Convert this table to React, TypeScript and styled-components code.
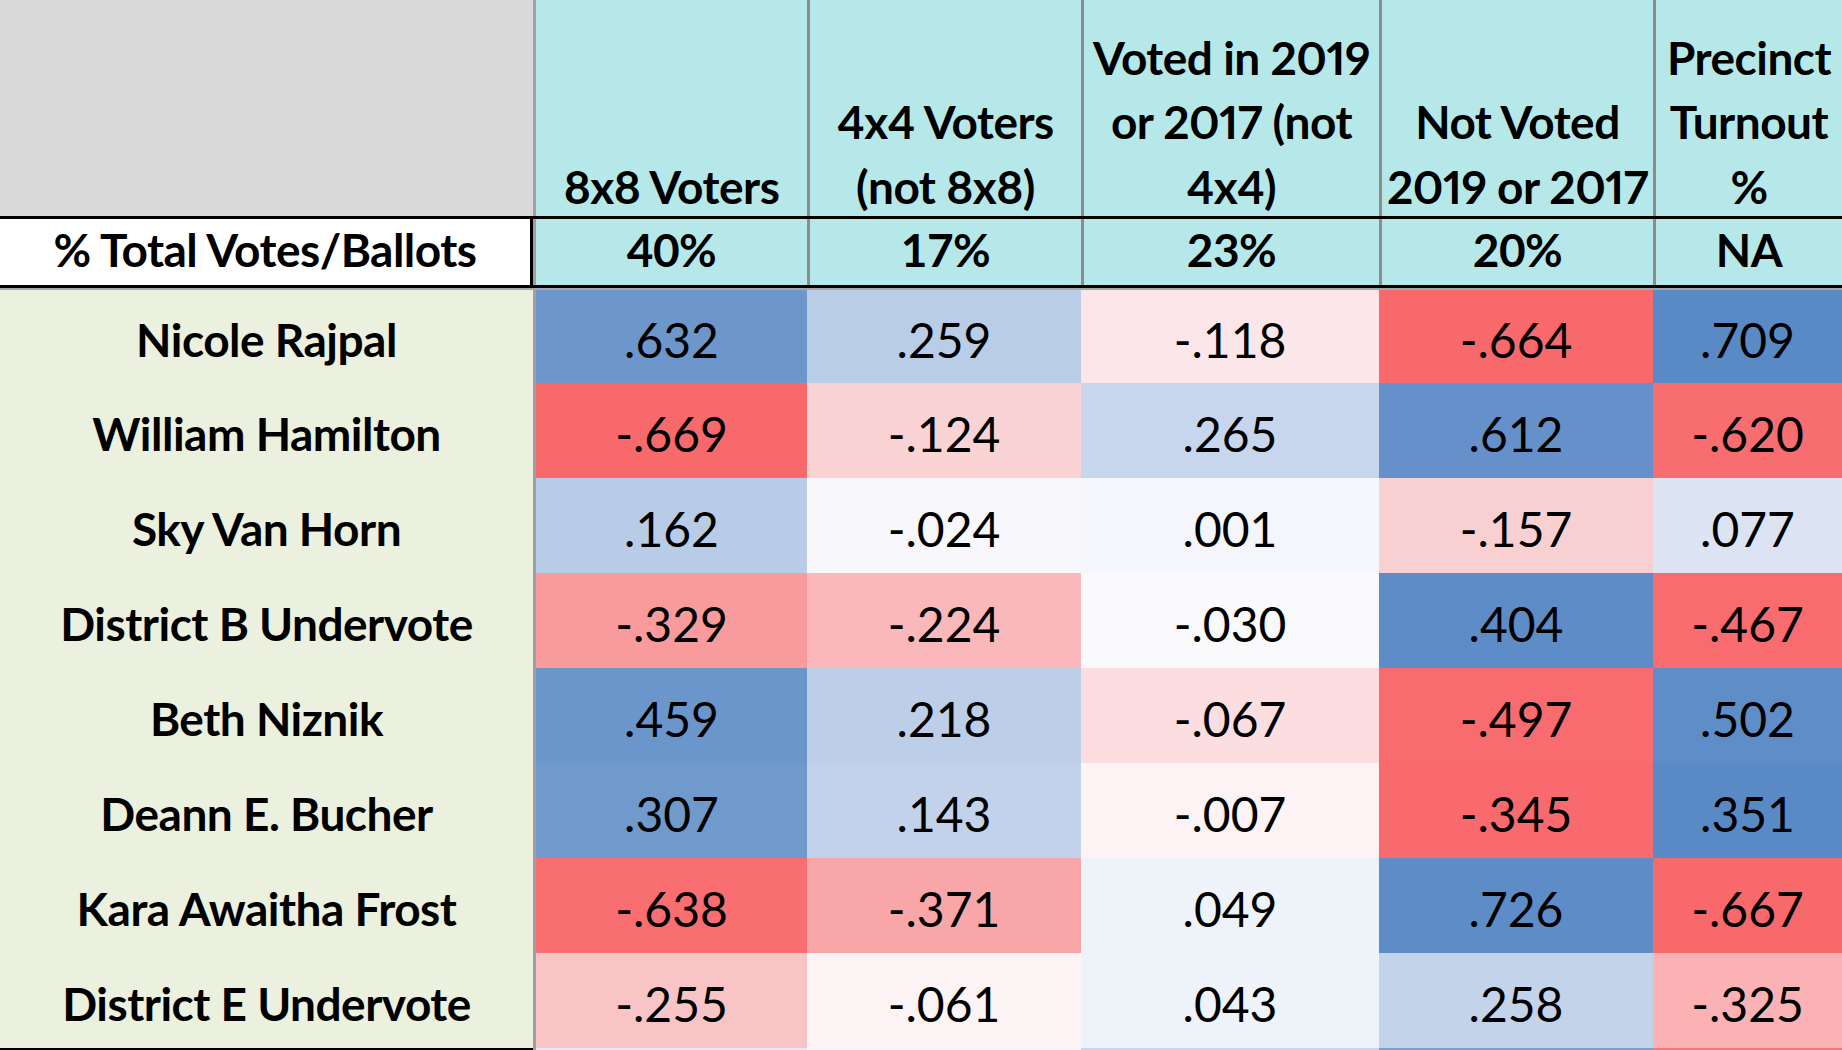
import React from 'react';
import styled, { createGlobalStyle } from 'styled-components';

const GlobalStyle = createGlobalStyle`
  html, body {
    margin: 0;
    padding: 0;
    background: #ffffff;
    overflow: hidden;
  }
  body {
    font-family: Lato, 'Open Sans', sans-serif;
    color: #000000;
  }
`;

const COLUMNS = '533px 274px 274px 298px 274px 1fr';

const Sheet = styled.div`
  width: 1842px;
  height: 1050px;
  overflow: hidden;
  display: flex;
  flex-direction: column;
`;

const Row = styled.div`
  display: grid;
  grid-template-columns: ${COLUMNS};
`;

const HeaderRow = styled(Row)`
  height: 216px;
  grid-template-rows: 216px;
  flex-shrink: 0;
`;

const Corner = styled.div`
  background: #d9d9d9;
`;

const HeadCell = styled.div<{ $first?: boolean }>`
  background: #b6e8ea;
  border-left: 3px solid ${p => (p.$first ? '#a0a0a0' : '#8c8c8c')};
  min-height: 0;
  display: flex;
  align-items: flex-end;
  justify-content: center;
  text-align: center;
  white-space: nowrap;
  font-weight: 700;
  font-size: 46px;
  letter-spacing: -0.5px;
  line-height: 64.5px;
  font-variant-numeric: proportional-nums;
`;

const HeadText = styled.span`
  margin-bottom: -3px;
`;

const TotalRow = styled(Row)`
  height: 72px;
  flex-shrink: 0;
  box-sizing: border-box;
  border-top: 3px solid #000;
  border-bottom: 3px solid #000;
  font-weight: 700;
  font-size: 46px;
  letter-spacing: -0.5px;
  white-space: nowrap;
`;

const TotalLabel = styled.div`
  background: #ffffff;
  border-right: 3px solid #000;
  display: flex;
  align-items: center;
  justify-content: center;
  padding-bottom: 5px;
`;

const TotalCell = styled.div<{ $first?: boolean }>`
  background: #b6e8ea;
  border-left: 3px solid ${p => (p.$first ? '#a0a0a0' : '#8c8c8c')};
  display: flex;
  align-items: center;
  justify-content: center;
  padding-bottom: 5px;
`;

const Body = styled.div`
  border-top: 2px solid #a6a6a6;
  display: flex;
  flex-direction: column;
`;

const DataRow = styled(Row)`
  height: 95px;
  flex-shrink: 0;
  &:first-child {
    height: 93px;
  }
`;

const EdgeRow = styled(Row)`
  height: 4px;
  flex-shrink: 0;
`;

const NameCell = styled.div`
  background: #ebf1de;
  display: flex;
  align-items: center;
  justify-content: center;
  padding-top: 6px;
  box-sizing: border-box;
  white-space: nowrap;
  font-weight: 700;
  font-size: 46px;
  letter-spacing: -0.5px;
`;

const ValueCell = styled.div<{ $bg: string; $first?: boolean }>`
  background: ${p => p.$bg};
  border-left: ${p => (p.$first ? '3px solid #a0a0a0' : 'none')};
  display: flex;
  align-items: center;
  justify-content: center;
  padding-top: 6px;
  box-sizing: border-box;
  font-size: 48px;
`;

const EdgeName = styled.div`
  background: #000;
`;

const EdgeCell = styled.div<{ $bg: string; $first?: boolean }>`
  background: ${p => p.$bg};
  border-left: ${p => (p.$first ? '3px solid #a0a0a0' : 'none')};
`;

const headers: string[][] = [
  ['8x8 Voters'],
  ['4x4 Voters', '(not 8x8)'],
  ['Voted in 2019', 'or 2017 (not', '4x4)'],
  ['Not Voted', '2019 or 2017'],
  ['Precinct', 'Turnout', '%'],
];

const totals = ['40%', '17%', '23%', '20%', 'NA'];

type Cell = [string, string];

const rows: { name: string; cells: Cell[] }[] = [
  {
    name: 'Nicole Rajpal',
    cells: [['.632', '#6d97cb'], ['.259', '#bacde7'], ['-.118', '#fbe7ea'], ['-.664', '#f8696b'], ['.709', '#5a8ac6']],
  },
  {
    name: 'William Hamilton',
    cells: [['-.669', '#f8696b'], ['-.124', '#fad3d5'], ['.265', '#c7d6ec'], ['.612', '#6690ca'], ['-.620', '#f86d70']],
  },
  {
    name: 'Sky Van Horn',
    cells: [['.162', '#b8cbe7'], ['-.024', '#f8f8fc'], ['.001', '#f4f6fc'], ['-.157', '#f9d0d2'], ['.077', '#dce4f3']],
  },
  {
    name: 'District B Undervote',
    cells: [['-.329', '#f99a9d'], ['-.224', '#fab8ba'], ['-.030', '#fafafd'], ['.404', '#5e8cc7'], ['-.467', '#f86c6f']],
  },
  {
    name: 'Beth Niznik',
    cells: [['.459', '#6b96cb'], ['.218', '#bccee8'], ['-.067', '#fcdde0'], ['-.497', '#f86b6e'], ['.502', '#5f8dc8']],
  },
  {
    name: 'Deann E. Bucher',
    cells: [['.307', '#7099cc'], ['.143', '#c2d2ea'], ['-.007', '#fdf3f4'], ['-.345', '#f86a6d'], ['.351', '#5a8ac6']],
  },
  {
    name: 'Kara Awaitha Frost',
    cells: [['-.638', '#f86e71'], ['-.371', '#f9a6a8'], ['.049', '#eef2f9'], ['.726', '#5e8cc7'], ['-.667', '#f8696b']],
  },
  {
    name: 'District E Undervote',
    cells: [['-.255', '#f9c4c6'], ['-.061', '#fcf3f4'], ['.043', '#eef2f9'], ['.258', '#c3d3ea'], ['-.325', '#fab2b4']],
  },
];

const edgeColors = ['#e3eaf5', '#f3f5fb', '#c8d6eb', '#7c9fd1', '#f7787b'];

const App: React.FC = () => {
  return (
    <>
      <GlobalStyle />
      <Sheet>
        <HeaderRow>
          <Corner />
          {headers.map((lines, i) => (
            <HeadCell key={i} $first={i === 0}>
              <HeadText>
                {lines.map((line, j) => (
                  <React.Fragment key={j}>
                    {j > 0 && <br />}
                    {line}
                  </React.Fragment>
                ))}
              </HeadText>
            </HeadCell>
          ))}
        </HeaderRow>

        <TotalRow>
          <TotalLabel>% Total Votes/Ballots</TotalLabel>
          {totals.map((t, i) => (
            <TotalCell key={i} $first={i === 0}>{t}</TotalCell>
          ))}
        </TotalRow>

        <Body>
          {rows.map(row => (
            <DataRow key={row.name}>
              <NameCell>{row.name}</NameCell>
              {row.cells.map(([value, bg], i) => (
                <ValueCell key={i} $bg={bg} $first={i === 0}>{value}</ValueCell>
              ))}
            </DataRow>
          ))}
          <EdgeRow>
            <EdgeName />
            {edgeColors.map((bg, i) => (
              <EdgeCell key={i} $bg={bg} $first={i === 0} />
            ))}
          </EdgeRow>
        </Body>
      </Sheet>
    </>
  );
};

export default App;
